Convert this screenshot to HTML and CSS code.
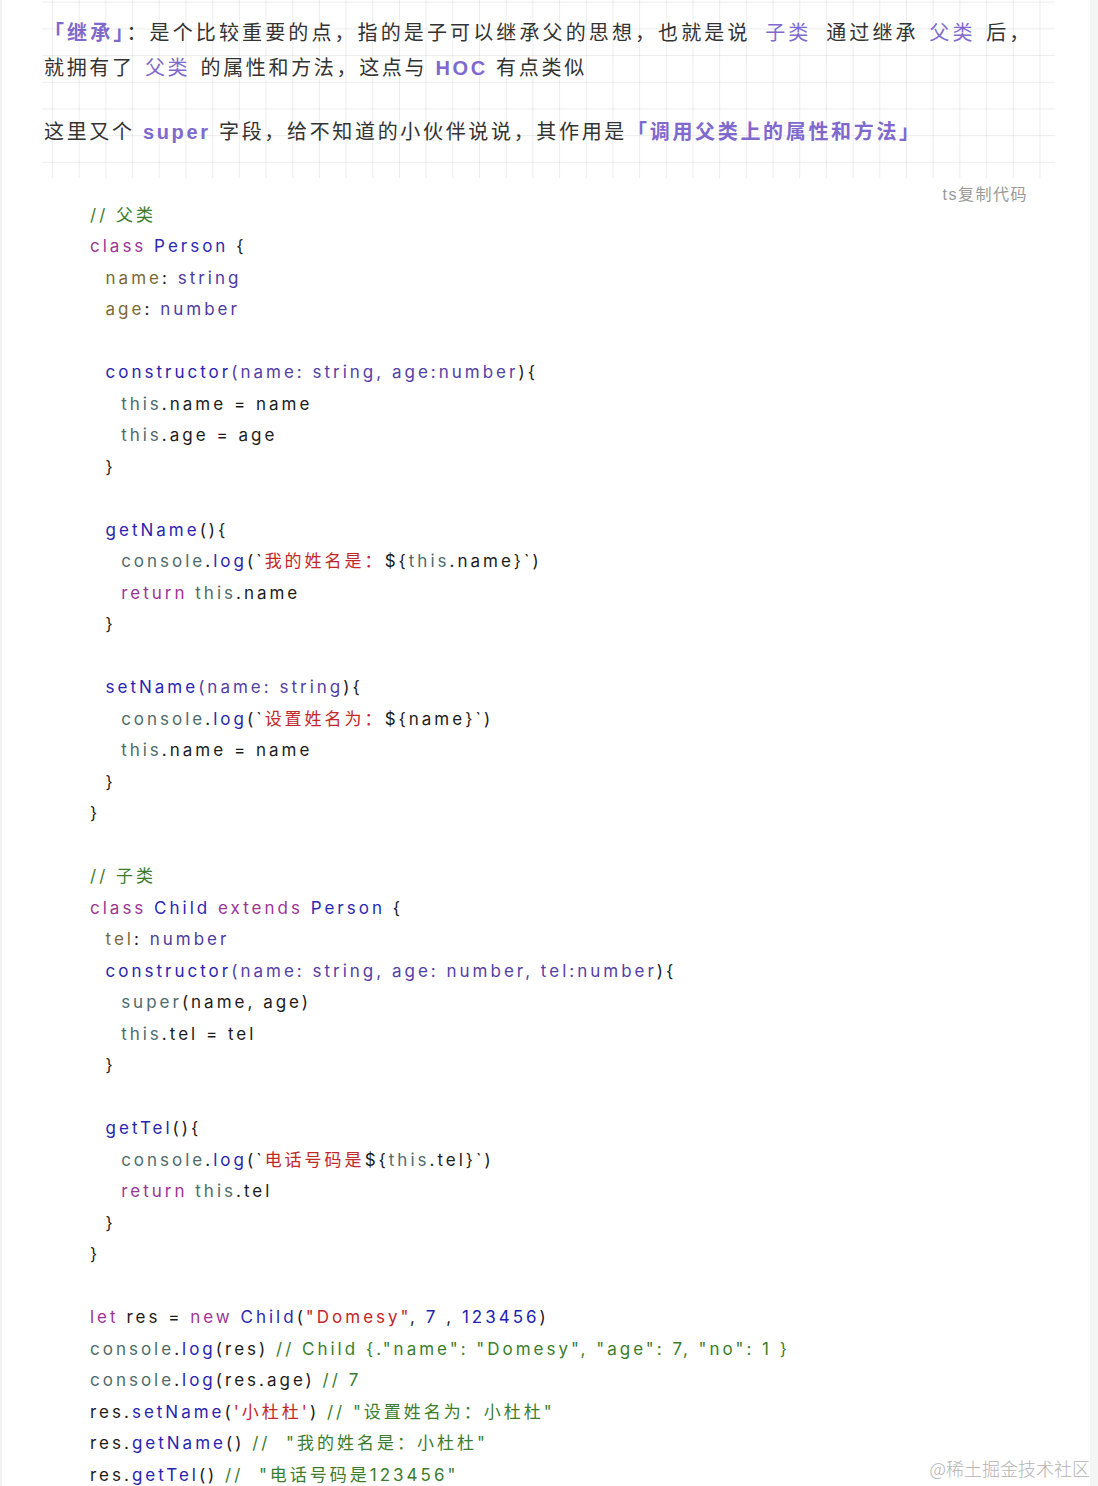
FILE: index.html
```html
<!DOCTYPE html>
<html lang="zh-CN">
<head>
<meta charset="utf-8">
<title>继承</title>
<link rel="stylesheet" href="styles.css">
</head>
<body>
<div class="card">
  <article class="article">
    <p class="para"><strong class="em">「继承」</strong>：是个比较重要的点，指的是子可以继承父的思想，也就是说 <span class="hl wide">子类</span> 通过继承 <span class="hl">父类</span> 后，就拥有了 <span class="hl">父类</span> 的属性和方法，这点与 <strong class="em">HOC</strong> 有点类似</p>
    <p class="para last">这里又个 <strong class="em">super</strong> 字段，给不知道的小伙伴说说，其作用是<strong class="em">「调用父类上的属性和方法」</strong></p>
    <div class="pre"><span class="lang">ts复制代码</span><pre class="code"><span class="c">// 父类</span>
<span class="k">class</span> <span class="t">Person</span> {
  <span class="p">name</span>: <span class="ty">string</span>
  <span class="p">age</span>: <span class="ty">number</span>

  <span class="f">constructor</span><span class="a">(name: string, age:number</span>){
    <span class="th">this</span>.name = name
    <span class="th">this</span>.age = age
  }

  <span class="f">getName</span>(){
    <span class="th">console</span>.<span class="f">log</span>(`<span class="s">我的姓名是：</span>${<span class="th">this</span>.name}`)
    <span class="k">return</span> <span class="th">this</span>.name
  }

  <span class="f">setName</span><span class="a">(name: string</span>){
    <span class="th">console</span>.<span class="f">log</span>(`<span class="s">设置姓名为：</span>${name}`)
    <span class="th">this</span>.name = name
  }
}

<span class="c">// 子类</span>
<span class="k">class</span> <span class="t">Child</span> <span class="k">extends</span> <span class="t">Person</span> {
  <span class="p">tel</span>: <span class="ty">number</span>
  <span class="f">constructor</span><span class="a">(name: string, age: number, tel:number</span>){
    <span class="th">super</span>(name, age)
    <span class="th">this</span>.tel = tel
  }

  <span class="f">getTel</span>(){
    <span class="th">console</span>.<span class="f">log</span>(`<span class="s">电话号码是</span>${<span class="th">this</span>.tel}`)
    <span class="k">return</span> <span class="th">this</span>.tel
  }
}

<span class="k">let</span> res = <span class="k">new</span> <span class="t">Child</span>(<span class="s">"Domesy"</span>, <span class="n">7</span> , <span class="n">123456</span>)
<span class="th">console</span>.<span class="f">log</span>(res) <span class="c">// Child {."name": "Domesy", "age": 7, "no": 1 }</span>
<span class="th">console</span>.<span class="f">log</span>(res.age) <span class="c">// 7</span>
res.<span class="f">setName</span>(<span class="s">'小杜杜'</span>) <span class="c">// "设置姓名为：小杜杜"</span>
res.<span class="f">getName</span>() <span class="c">//  "我的姓名是：小杜杜"</span>
res.<span class="f">getTel</span>() <span class="c">//  "电话号码是123456"</span></pre></div>
  </article>
</div>
<div class="watermark">@稀土掘金技术社区</div>
</body>
</html>
```

FILE: styles.css
```css
* { box-sizing: border-box; }
html, body { margin: 0; padding: 0; }
body {
  background: #f4f5f5;
  width: 1098px;
  height: 1486px;
  overflow: hidden;
  position: relative;
  font-family: "Liberation Sans", "Noto Sans CJK SC", sans-serif;
}
.card {
  width: 1090px;
  height: 1486px;
  background: #fff;
  border-left: 2px solid #f2f2f2;
  overflow: hidden;
}
.article {
  margin-left: 40px;
  width: 1013px;
  padding: 15.5px 23px 0 2px;
  color: #333;
  font-size: 20px;
  line-height: 35px;
  letter-spacing: 2.67px;
  background-image:
    linear-gradient(90deg, rgba(0,0,0,.07) 1px, transparent 1px),
    linear-gradient(180deg, rgba(0,0,0,.07) 1px, transparent 1px);
  background-size: 26.7px 26.7px;
  background-position: 10px 1.7px;
}
.para { margin: 0 0 29.5px; text-align: justify; }
.para.last { margin-bottom: 0; }
.em { color: #8069cd; font-weight: 700; }
.hl { color: #8069cd; margin: 0 2px; }
.hl.wide { margin: 0 6px; }
.pre {
  position: relative;
  margin: 27.5px -23px 0 -2px;
  background: #fff;
  padding: 22px 0 60px 48px;
}
.lang {
  position: absolute;
  top: 7px;
  right: 27px;
  font-size: 16px;
  line-height: 20px;
  color: #999;
  letter-spacing: 1.5px;
}
.code {
  margin: 0;
  font-family: Inter, "Noto Sans CJK SC", sans-serif;
  font-size: 17px;
  line-height: 31.5px;
  letter-spacing: 3px;
  color: #1c1c1c;
  white-space: pre;
}
.c { color: #3b7d2d; }
.k { color: #9b3596; }
.t { color: #2c28b4; }
.f { color: #2a25b0; }
.a { color: #5540a6; }
.p { color: #7a6a33; }
.ty { color: #4e3c9e; }
.th { color: #4f6b6c; }
.s { color: #c2272a; }
.n { color: #2222b0; }
.watermark {
  position: absolute;
  right: 8px;
  top: 1456px;
  font-size: 18px;
  line-height: 24px;
  color: #b4b4b4;
  font-family: "Noto Sans CJK SC", sans-serif;
  font-weight: 300;
}
```
